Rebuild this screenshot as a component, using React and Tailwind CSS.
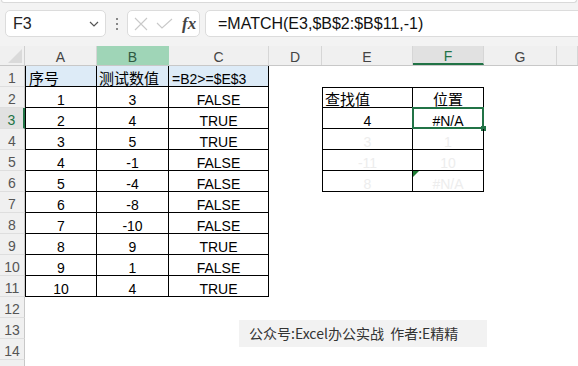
import React from "react";

const W = ["w-[72px]", "w-[72px]", "w-[100px]", "w-[53px]", "w-[91px]", "w-[71px]", "w-[73px]", "w-[21px]"];
const LETTERS = ["A", "B", "C", "D", "E", "F", "G", ""];
const BV = [3, 4, 5, -1, -4, -8, -10, 9, 1, 4];
const CV = ["FALSE", "TRUE", "TRUE", "FALSE", "FALSE", "FALSE", "FALSE", "TRUE", "FALSE", "TRUE"];
const LIGHT = {
  4: ["3", "1"],
  5: ["-11", "10"],
  6: ["8", "#N/A"],
};

const FONT = { fontFamily: '"Liberation Sans", "Noto Sans CJK SC", sans-serif' };

function cellInfo(r, c) {
  if (r >= 1 && r <= 11 && c <= 2) {
    let cls = "border-r border-b border-black";
    if (c === 0) cls += " border-l";
    if (r === 1) {
      const t = ["序号", "测试数值", "=B2>=$E$3"][c];
      const pad = ["pl-[3px]", "pl-[2px]", "pl-[3px]"][c];
      const size = c === 2 ? "text-[14px]" : "text-[15px]";
      return { text: t, cls: cls + " bg-[#ddebf7] justify-start text-black " + size + " " + pad };
    }
    const t = c === 0 ? String(r - 1) : c === 1 ? String(BV[r - 2]) : CV[r - 2];
    return { text: t, cls: cls + " justify-center text-black text-[14px]" };
  }
  if (r >= 2 && r <= 6 && (c === 4 || c === 5)) {
    let cls = "border-r border-b border-black";
    if (c === 4) cls += " border-l";
    if (r === 2) cls += " border-t";
    if (r === 2) {
      if (c === 4) return { text: "查找值", cls: cls + " justify-start pl-[2px] text-[15px] text-black" };
      return { text: "位置", cls: cls + " justify-center text-[15px] text-black" };
    }
    if (r === 3) {
      if (c === 4) return { text: "4", cls: cls + " justify-center text-[14px] text-black" };
      return { text: "#N/A", cls: cls + " justify-center text-[14px] text-black", sel: true };
    }
    const t = LIGHT[r][c - 4];
    return { text: t, cls: cls + " justify-center text-[14px] text-[#ededed]", tri: r === 6 && c === 5 };
  }
  return { text: "", cls: "" };
}

function RowHead({ n, label }) {
  const active = n === 3;
  return (
    <div
      className={
        "w-[25px] h-full shrink-0 flex items-end justify-center border-b border-[#dedede] text-[14px] leading-[14px] pb-[1px] " +
        (active
          ? "bg-[#e1e1e1] border-r-2 border-r-[#217346] text-[#217346]"
          : "bg-[#f0f0f0] border-r border-r-[#c8c8c8] text-[#555]")
      }
    >
      {label}
    </div>
  );
}

function Row({ r, showLabel = true }) {
  return (
    <div className="flex shrink-0 h-[21px]">
      <RowHead n={r} label={showLabel ? r : ""} />
      {W.map((w, c) => {
        const info = cellInfo(r, c);
        return (
          <div
            key={c}
            className={w + " h-full shrink-0 relative flex items-end whitespace-nowrap leading-[14px] " + info.cls}
          >
            {info.text}
            {info.sel && (
              <>
                <div className="absolute -left-[1px] -top-[1px] -right-[1px] -bottom-[1px] border-2 border-[#217346]" />
                <div className="absolute -right-[3px] -bottom-[3px] w-[5px] h-[5px] bg-[#217346]" />
              </>
            )}
            {info.tri && (
              <svg className="absolute left-0 top-0" width="6" height="6" viewBox="0 0 6 6">
                <polygon points="0,0 6,0 0,6" fill="#1e7b34" />
              </svg>
            )}
          </div>
        );
      })}
    </div>
  );
}

export default function App() {
  const rows = [];
  for (let r = 1; r <= 14; r++) rows.push(r);
  return (
    <div className="relative w-[578px] h-[366px] overflow-hidden bg-white flex flex-col" style={FONT}>
      {/* Top / formula bar */}
      <div className="bg-[#f3f3f3] h-[46px] shrink-0 flex flex-col">
        <div className="h-[3px] mx-[1px] bg-white border-b border-x border-[#d9d9d9] rounded-b-[5px]" />
        <div className="flex items-center h-[27px] mt-[7px] pl-[5px]">
          <div className="w-[101px] h-[27px] bg-white border border-[#dcdcdc] rounded-[5px] flex items-center pl-[7px] pr-[6px]">
            <span className="text-[16px] text-[#222] flex-1">F3</span>
            <svg width="10" height="6" viewBox="0 0 10 6">
              <path d="M1 1 L5 5 L9 1" fill="none" stroke="#555" strokeWidth="1.2" />
            </svg>
          </div>
          <div className="w-[21px] h-[27px] flex flex-col items-center justify-center gap-[3px]">
            <div className="w-[2px] h-[2px] bg-[#888]" />
            <div className="w-[2px] h-[2px] bg-[#888]" />
            <div className="w-[2px] h-[2px] bg-[#888]" />
          </div>
          <div className="w-[73px] h-[27px] bg-white border border-[#dcdcdc] rounded-[5px] flex items-center pl-[6px]">
            <svg width="14" height="14" viewBox="0 0 14 14">
              <path d="M1 1 L13 13 M13 1 L1 13" stroke="#c9c9c9" strokeWidth="1.1" fill="none" />
            </svg>
            <svg className="ml-[8px]" width="17" height="12" viewBox="0 0 17 12">
              <path d="M1 5 L6 10 L16 1" stroke="#c9c9c9" strokeWidth="1.1" fill="none" />
            </svg>
            <span
              className="ml-[9px] text-[17px] italic font-bold text-[#444] leading-none"
              style={{ fontFamily: '"Liberation Serif", serif' }}
            >
              fx
            </span>
          </div>
          <div className="flex-1 h-[27px] ml-[5px] -mr-[8px] bg-white border border-[#dcdcdc] rounded-[5px] flex items-center pl-[12px]">
            <span className="text-[16px] text-[#111]">=MATCH(E3,$B$2:$B$11,-1)</span>
          </div>
        </div>
      </div>

      {/* Column headers */}
      <div className="flex h-[20px] shrink-0 bg-[#f0f0f0] border-b border-[#c8c8c8]">
        <div className="w-[25px] h-full shrink-0 relative border-r border-[#d0d0d0]">
          <svg className="absolute right-[2px] bottom-[2px]" width="14" height="14" viewBox="0 0 14 14">
            <polygon points="14,0 14,14 0,14" fill="#dadada" />
          </svg>
        </div>
        {W.map((w, c) => {
          const L = LETTERS[c];
          let cls = "border-r border-[#d6d6d6] text-[#444]";
          if (L === "B") cls = "bg-[#9fd5b7] border-r border-[#9fd5b7] text-[#2f5a42]";
          if (L === "F") cls = "bg-[#e1e1e1] border-r border-[#d6d6d6] border-b-2 border-b-[#217346] text-[#217346]";
          return (
            <div
              key={c}
              className={w + " h-full shrink-0 flex items-center justify-center pt-[2px] text-[14px] leading-[14px] " + cls}
            >
              {L}
            </div>
          );
        })}
      </div>

      {/* Rows */}
      {rows.map((r) => (
        <Row key={r} r={r} />
      ))}
      <Row r={15} showLabel={false} />

      {/* Floating text box */}
      <div
        className="absolute left-[239px] top-[320px] w-[248px] h-[27px] bg-[#f2f2f2] flex items-center pl-[10px] text-[14px] text-[#333] whitespace-nowrap"
        style={{ fontFamily: '"Noto Sans CJK SC", sans-serif' }}
      >
        公众号:Excel办公实战&nbsp;&nbsp;作者:E精精
      </div>
    </div>
  );
}
